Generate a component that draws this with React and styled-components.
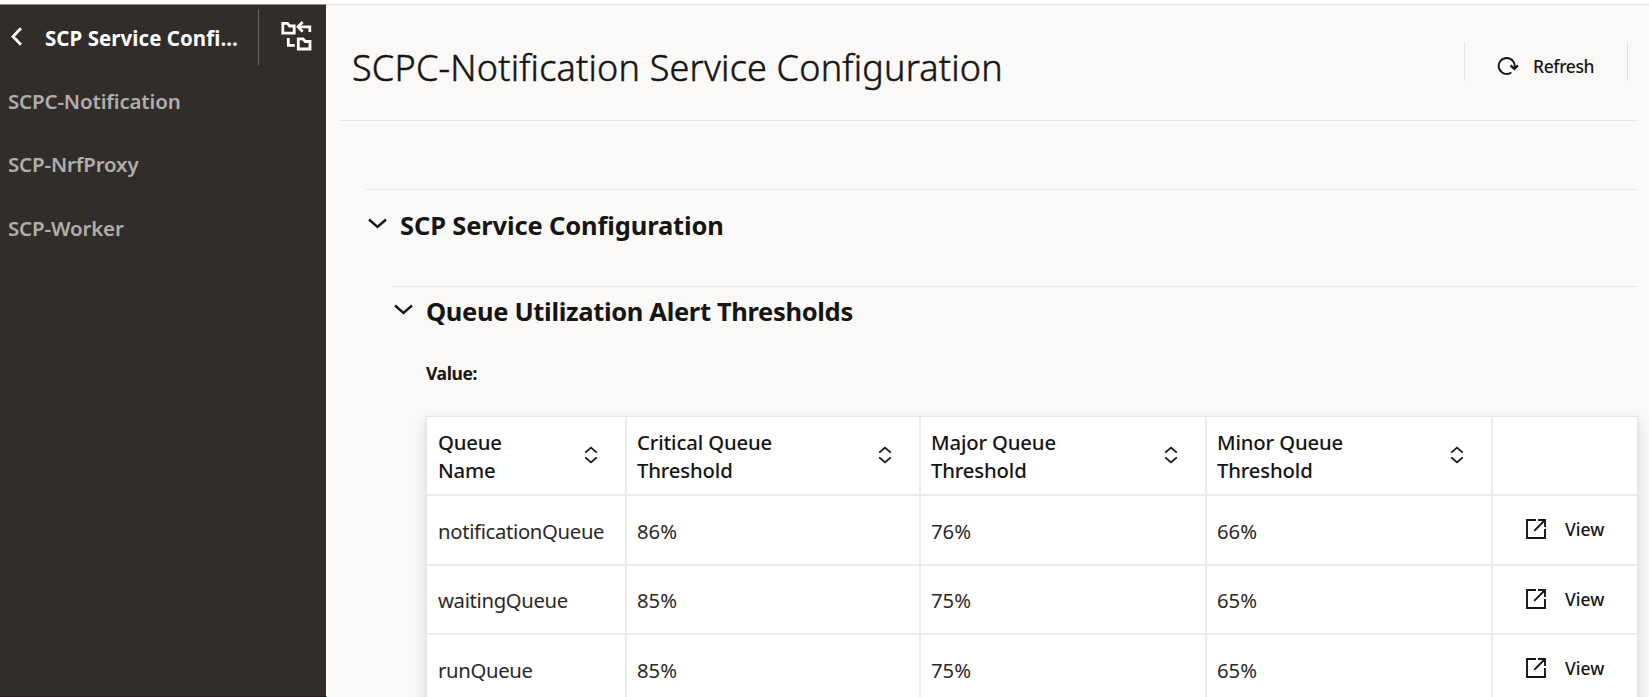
import React, { useState } from 'react'
import styled, { createGlobalStyle } from 'styled-components';

const services = ['SCPC-Notification', 'SCP-NrfProxy', 'SCP-Worker']

const columns = ['Queue Name', 'Critical Queue Threshold', 'Major Queue Threshold', 'Minor Queue Threshold']

const queues = [
    { name: 'notificationQueue', critical: '86%', major: '76%', minor: '66%' },
    { name: 'waitingQueue', critical: '85%', major: '75%', minor: '65%' },
    { name: 'runQueue', critical: '85%', major: '75%', minor: '65%' },
]

const ChevronDown = () => (
    <svg width="19" height="12" viewBox="0 0 19 12" fill="none" stroke="#161513" strokeWidth="2.4">
        <path d="M1 1.5 L9.5 8.8 L18 1.5" />
    </svg>
)

const SortIcon = () => (
    <svg width="14" height="18" viewBox="0 0 14 18" fill="none" stroke="#161513" strokeWidth="1.8">
        <path d="M1.2 6.6 L7 1.6 L12.8 6.6 M1.2 11.4 L7 16.4 L12.8 11.4" />
    </svg>
)

const OpenIcon = () => (
    <svg width="20" height="20" viewBox="0 0 20 20" fill="none" stroke="#161513" strokeWidth="1.9">
        <path d="M10 1 H1 V19 H19 V10" />
        <path d="M12 1 H19 V8 M19 1 L8.2 11.8" />
    </svg>
)

const RefreshIcon = () => (
    <svg width="22" height="20" viewBox="0 0 22 20" fill="none" stroke="#161513" strokeWidth="1.9">
        <path d="M14.4 16.4 A8 8 0 1 1 17.3 12.4" />
        <path d="M13.6 9.4 L17.3 13 L21 9.4" strokeWidth="2.2" />
    </svg>
)

const TreeIcon = () => (
    <svg width="31" height="30" viewBox="0 0 31 30" fill="none" stroke="#fff" strokeWidth="2.8">
        <path d="M1.8 2.3 H6.4 L8.6 5 H13.2 V12.2 H1.8 Z" />
        <path d="M17.3 17.8 H21.9 L24.3 20.5 H29 V28 H17.3 Z" />
        <path d="M18 5.8 H28.8 V11" />
        <path d="M21.6 1 L17 5.8 L21.6 10.6" />
        <path d="M7.3 17 V24.3 H13.8" />
    </svg>
)

const App = () => {
    const [open, setOpen] = useState({ service: true, queue: true })

    const toggle = (key) => setOpen(open => ({ ...open, [key]: !open[key] }))

  return (
    <Page>
        <GlobalStyle />
        <Sidebar>
            <SidebarHeader>
                <BackBtn aria-label="Back">
                    <svg width="11" height="19" viewBox="0 0 11 19" fill="none" stroke="#fff" strokeWidth="2.8">
                        <path d="M10 1.2 L2 9.5 L10 17.8" />
                    </svg>
                </BackBtn>
                <SidebarTitle>SCP Service Confi...</SidebarTitle>
                <TreeBtn aria-label="Hierarchy"><TreeIcon /></TreeBtn>
            </SidebarHeader>
            <nav>
                {services.map(name => <NavItem key={name}>{name}</NavItem>)}
            </nav>
        </Sidebar>
        <Content>
            <PageHeader>
                <Title>SCPC-Notification Service Configuration</Title>
                <RefreshBtn><RefreshIcon />Refresh</RefreshBtn>
            </PageHeader>
            <Section>
                <SectionHeader onClick={() => toggle('service')}>
                    <ChevronDown />
                    <SectionTitle $spacing="-0.14px">SCP Service Configuration</SectionTitle>
                </SectionHeader>
                {open.service &&
                <SubSection>
                    <SectionHeader $compact onClick={() => toggle('queue')}>
                        <ChevronDown />
                        <SectionTitle>Queue Utilization Alert Thresholds</SectionTitle>
                    </SectionHeader>
                    {open.queue &&
                    <SubBody>
                        <Label>Value:</Label>
                        <Table>
                            <Row $head>
                                {columns.map(col => (
                                    <HeadCell key={col}>
                                        <HeadText>{col}</HeadText>
                                        <SortIcon />
                                    </HeadCell>
                                ))}
                                <HeadCell />
                            </Row>
                            {queues.map(q => (
                                <Row key={q.name}>
                                    <Cell $spacing="-0.33px">{q.name}</Cell>
                                    <Cell>{q.critical}</Cell>
                                    <Cell>{q.major}</Cell>
                                    <Cell>{q.minor}</Cell>
                                    <ViewBtn><OpenIcon />View</ViewBtn>
                                </Row>
                            ))}
                        </Table>
                    </SubBody>}
                </SubSection>}
            </Section>
        </Content>
    </Page>
  )
}

const GlobalStyle = createGlobalStyle`
* {
    box-sizing: border-box;
}
body {
    margin: 0;
    overflow: hidden;
    background-color: #fbf9f8;
    color: #161513;
    font-family: 'Noto Sans', 'Open Sans', sans-serif;
}
button {
    border: none;
    background: none;
    padding: 0;
    color: inherit;
    font-family: inherit;
    cursor: pointer;
}
svg {
    flex: none;
    display: block;
}
`
const Page = styled.div`
    height: 100vh;
    display: flex;
    overflow: hidden;
    border-top: 4px solid #fff;
`
const Sidebar = styled.aside`
    width: 327px;
    flex: none;
    background-color: #312d2a;
    border-top: 1px solid #8f8d8b;
    border-right: 1px solid #fff;
    border-bottom: 1px solid #2a1f1d;
`
const SidebarHeader = styled.div`
    height: 65px;
    display: flex;
    align-items: center;
    padding-left: 11px;
`
const BackBtn = styled.button`
    margin-bottom: 3px;
`
const SidebarTitle = styled.h2`
    margin: 0 0 0 23px;
    flex: 1;
    color: #fff;
    font-size: 20.5px;
    font-weight: 700;
    letter-spacing: 0.05px;
    line-height: 28px;
    white-space: nowrap;
`
const TreeBtn = styled.button`
    width: 68px;
    height: 56px;
    margin-bottom: 1px;
    padding: 0 0 2px 22px;
    border-left: 1px solid #6b6764;
`
const NavItem = styled.div`
    height: 63.3px;
    padding: 0 0 1px 8px;
    display: flex;
    align-items: center;
    color: #b0adab;
    font-size: 20.5px;
    font-weight: 600;
    letter-spacing: -0.15px;
`
const Content = styled.main`
    flex: 1;
    min-width: 0;
    border-top: 1px solid #e6e5e4;
    padding: 0 11px 0 13px;
`
const PageHeader = styled.header`
    height: 116px;
    display: flex;
    justify-content: space-between;
    align-items: flex-start;
    padding: 37px 10px 0 12px;
    border-bottom: 1px solid #e8e6e5;
`
const Title = styled.h1`
    margin: 1px 0 0;
    font-size: 36px;
    font-weight: 300;
    letter-spacing: 0.2px;
    line-height: 50px;
    -webkit-text-stroke: 0.5px #161513;
`
const RefreshBtn = styled.button`
    width: 164px;
    height: 39px;
    display: flex;
    align-items: center;
    gap: 14px;
    padding: 9px 0 0 32px;
    border-left: 1px solid #e3e1e0;
    border-right: 1px solid #e3e1e0;
    font-size: 17.5px;
    font-weight: 500;
    letter-spacing: -0.4px;
`
const Section = styled.section`
    margin: 68px 0 0 26px;
    border-top: 1px solid #e8e6e5;
`
const SubSection = styled.section`
    margin-left: 26px;
    border-top: 1px solid #e8e6e5;
`
const SectionHeader = styled.div`
    height: ${props => props.$compact ? '48px' : '96px'};
    padding: ${props => props.$compact ? '6px 0 0 2px' : '17px 0 0 2px'};
    display: flex;
    align-items: flex-start;
    cursor: pointer;
    svg {
        margin-top: 11px;
    }
`
const SectionTitle = styled.h3`
    margin: 0 0 0 13px;
    font-size: 25.5px;
    font-weight: 700;
    letter-spacing: ${props => props.$spacing || '-0.33px'};
    line-height: 36px;
`
const SubBody = styled.div`
    padding-left: 34px;
`
const Label = styled.div`
    margin: 25px 0 30px;
    font-size: 17.5px;
    font-weight: 700;
    letter-spacing: -0.4px;
    line-height: 26px;
`
const Table = styled.div`
    border: 1px solid #e6e5e4;
    background-color: #fff;
    box-shadow: 0 4px 12px rgba(0, 0, 0, 0.14);
`
const Row = styled.div`
    display: grid;
    grid-template-columns: 198px 294px 286px 286px 1fr;
    height: ${props => props.$head ? '79px' : '69.6px'};
    border-bottom: 2px solid #ececeb;
    > * + * {
        border-left: 2px solid #ececeb;
    }
`
const HeadCell = styled.div`
    display: flex;
    align-items: center;
    justify-content: space-between;
    padding: 1px 27px 0 11px;
    & + & {
        padding-left: 10px;
    }
    svg {
        margin-bottom: 2px;
    }
`
const HeadText = styled.span`
    max-width: 150px;
    font-size: 20.3px;
    font-weight: 500;
    letter-spacing: -0.15px;
    line-height: 28px;
    /* keeps the name header on two lines */
    ${HeadCell}:first-child & {
        width: 80px;
    }
`
const Cell = styled.div`
    display: flex;
    align-items: center;
    padding: 2px 0 0 11px;
    color: #2b2927;
    font-size: 20.3px;
    font-weight: 400;
    letter-spacing: ${props => props.$spacing || '0px'};
    white-space: nowrap;
    & + & {
        padding-left: 10px;
    }
`
const ViewBtn = styled.button`
    display: flex;
    align-items: center;
    gap: 19px;
    padding: 0 0 1px 33px;
    font-size: 17.5px;
    font-weight: 500;
`
export default App;
